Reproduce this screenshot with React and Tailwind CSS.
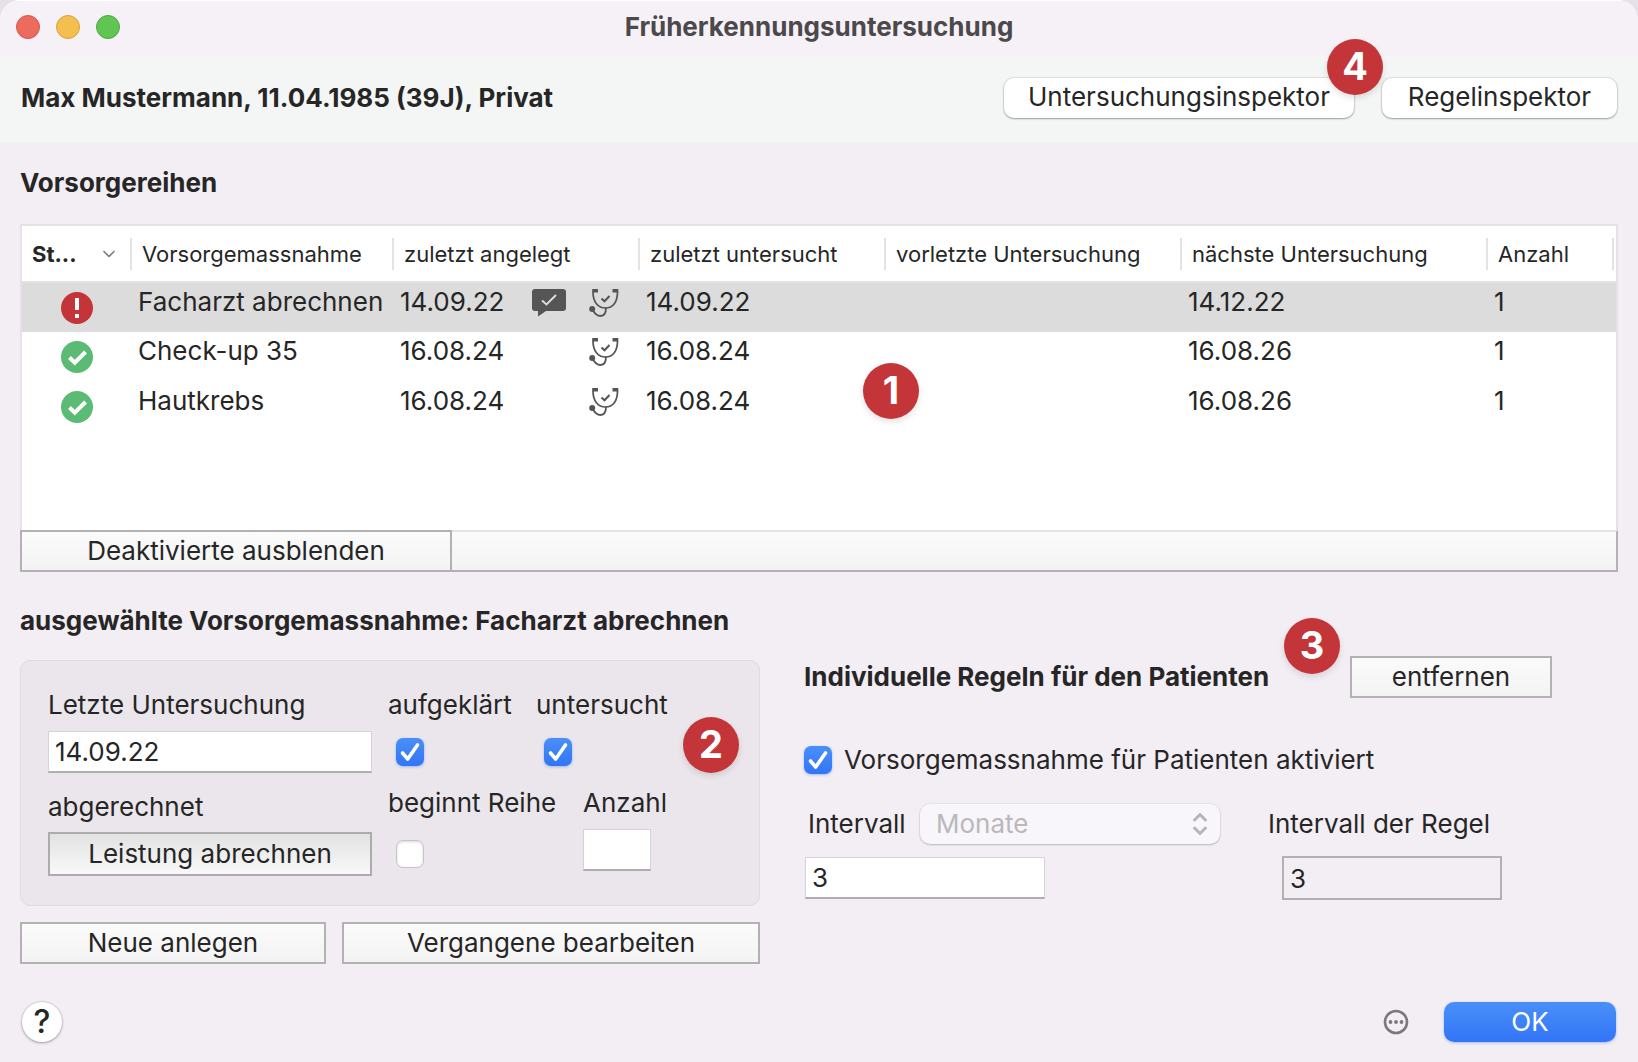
import { ChevronDown } from 'lucide-react'

const rows = [
  { status: 'alert', name: 'Facharzt abrechnen', created: '14.09.22', informed: true, examined: '14.09.22', next: '14.12.22', count: 1, selected: true },
  { status: 'ok', name: 'Check-up 35', created: '16.08.24', examined: '16.08.24', next: '16.08.26', count: 1 },
  { status: 'ok', name: 'Hautkrebs', created: '16.08.24', examined: '16.08.24', next: '16.08.26', count: 1 },
]

function StatusIcon({ status }) {
  if (status === 'alert') {
    return (
      <svg viewBox="0 0 32 32" className="size-8">
        <circle cx="16" cy="16" r="16" fill="#c33538" />
        <path d="M14 6h4v12h-4zM14 22h4v4h-4z" fill="#fff" />
      </svg>
    )
  }
  return (
    <svg viewBox="0 0 32 32" className="size-8">
      <circle cx="16" cy="16" r="16" fill="#5bbb74" />
      <path d="M8.5 16.5l5.3 5.2L24.500 11" fill="none" stroke="#fff" strokeWidth="4" />
    </svg>
  )
}

function SpeechIcon() {
  return (
    <svg viewBox="0 0 34 28" className="h-7 w-[34px]">
      <path d="M3 0h28a3 3 0 0 1 3 3v16a3 3 0 0 1-3 3H14l-8 5.500V22H3a3 3 0 0 1-3-3V3a3 3 0 0 1 3-3z" fill="#555" />
      <path d="M10 11.500l4.500 4L24 6" fill="none" stroke="#dcdcdc" strokeWidth="2" />
    </svg>
  )
}

function StethoscopeIcon() {
  return (
    <svg viewBox="0 0 30 28" className="h-7 w-[30px]" fill="none" stroke="#555">
      <path d="M4 3C4 13 9 19 16.500 19S28.500 13 28.500 3" strokeWidth="1.700" />
      <path d="M3.200 1.800H9M29.300 1.800H23.500" strokeWidth="3.600" />
      <path d="M12.500 9.500l3 2.800L20.500 7" strokeWidth="2" />
      <path d="M3.500 20.500c2 4 4.500 6.500 8 6.500 4 0 5.500-3.500 5.500-8.500" strokeWidth="1.800" />
      <circle cx="3.200" cy="20" r="3" fill="#555" stroke="none" />
    </svg>
  )
}

function Badge({ children, className }) {
  return (
    <span className={`absolute flex size-14 items-center justify-center rounded-full bg-[#c33538] pb-[2px] text-[38px] font-bold text-white shadow-[0_3px_6px_rgba(0,0,0,0.12)] ${className}`}>
      {children}
    </span>
  )
}

function Checkbox({ id, defaultChecked }) {
  return (
    <span className="relative block size-7 shrink-0">
      <input
        id={id}
        type="checkbox"
        defaultChecked={defaultChecked}
        className="peer block size-7 appearance-none rounded-[7px] border border-[#c6c3c7] bg-white shadow-[inset_0_1px_3px_rgba(0,0,0,0.15)] checked:border-0 checked:bg-linear-to-b checked:from-[#4a8ff8] checked:to-[#3274f7] checked:shadow-[0_1px_3px_rgba(50,116,247,0.4)]"
      />
      <svg viewBox="0 0 28 28" className="pointer-events-none absolute inset-0 hidden size-7 peer-checked:block">
        <path d="M6.500 15l5.200 6L21.500 7" fill="none" stroke="#fff" strokeWidth="3.600" strokeLinecap="round" strokeLinejoin="round" />
      </svg>
    </span>
  )
}

function SquareButton({ children, className = '' }) {
  return (
    <button className={`h-[42px] border-2 border-[#b2b2b2] bg-linear-to-b from-[#fbfbfb] to-[#f3f3f3] ${className}`}>
      {children}
    </button>
  )
}

function RoundedButton({ children, className = '' }) {
  return (
    <button className={`h-10 rounded-[10px] bg-white pb-[2px] shadow-[0_0_1px_1px_rgba(0,0,0,0.08),0_1px_2px_rgba(0,0,0,0.3)] ${className}`}>
      {children}
    </button>
  )
}

function TextField({ id, defaultValue, className = '' }) {
  return (
    <input
      id={id}
      type="text"
      defaultValue={defaultValue}
      className={`block h-[42px] border border-b-2 border-[#d6d2d7] border-b-[#b0adb1] bg-white px-1.5 outline-none ${className}`}
    />
  )
}

function Th({ children, className = '' }) {
  return (
    <th className="h-14 p-0 text-left font-normal">
      <div className={`flex h-8 items-center justify-between border-r-2 border-[#e3e3e3] pl-[10px] whitespace-nowrap ${className}`}>
        {children}
      </div>
    </th>
  )
}

function SeriesTable() {
  return (
    <div className="relative">
      <div className="h-[306px] border-2 border-b-0 border-[#e3e3e3] bg-white">
        <table className="w-full table-fixed">
          <colgroup>
            <col className="w-[110px]" />
            <col className="w-[262px]" />
            <col className="w-[246px]" />
            <col className="w-[246px]" />
            <col className="w-[296px]" />
            <col className="w-[306px]" />
            <col />
          </colgroup>
          <thead>
            <tr className="border-b-2 border-[#e3e3e3] text-[22px]">
              <Th className="pr-[11px] font-bold">
                St...
                <ChevronDown className="size-5 text-[#7d7d7d]" strokeWidth={2} />
              </Th>
              <Th>Vorsorgemassnahme</Th>
              <Th>zuletzt angelegt</Th>
              <Th>zuletzt untersucht</Th>
              <Th>vorletzte Untersuchung</Th>
              <Th>nächste Untersuchung</Th>
              <Th className="mr-[2px]">Anzahl</Th>
            </tr>
          </thead>
          <tbody>
            {rows.map((row) => (
              <tr key={row.name} className={`h-[50px] align-top whitespace-nowrap ${row.selected ? 'bg-[#dcdcdc]' : ''}`}>
                <td className="pt-[9px] pl-[39px]"><StatusIcon status={row.status} /></td>
                <td className="pt-[3px] pl-1.5">{row.name}</td>
                <td className="pt-[3px] pl-1.5">
                  <div className="flex justify-between pr-[21px]">
                    {row.created}
                    <span className="flex gap-[23px] pt-[3px]">
                      {row.informed && <SpeechIcon />}
                      <StethoscopeIcon />
                    </span>
                  </div>
                </td>
                <td className="pt-[3px] pl-1.5">{row.examined}</td>
                <td />
                <td className="pt-[3px] pl-1.5">{row.next}</td>
                <td className="pt-[3px] pl-1.5">{row.count}</td>
              </tr>
            ))}
          </tbody>
        </table>
      </div>
      <div className="flex">
        <SquareButton className="w-[432px]">Deaktivierte ausblenden</SquareButton>
        <div className="flex-1 border-t-2 border-r-2 border-b-2 border-[#b2b2b2] border-t-[#e3e3e3] bg-linear-to-b from-[#fbfbfb] to-[#f3f3f3]" />
      </div>
      <Badge className="top-[139px] left-[843px]">1</Badge>
    </div>
  )
}

function SelectedMeasure() {
  return (
    <section className="w-[740px] shrink-0">
      <h2 className="font-bold">ausgewählte Vorsorgemassnahme: Facharzt abrechnen</h2>
      <div className="relative mt-[23px] flex h-[246px] gap-4 rounded-[10px] border border-[#dfdbe0] bg-[#eae6eb] px-[27px] pt-7">
        <div className="w-[324px]">
          <label htmlFor="last" className="block">Letzte Untersuchung</label>
          <TextField id="last" defaultValue="14.09.22" className="mt-[10px] w-full" />
          <div className="mt-[18px]">abgerechnet</div>
          <button className="mt-[9px] h-11 w-full border-2 border-[#acacac] bg-linear-to-b from-[#e2e2e2] to-[#f9f9f9]">
            Leistung abrechnen
          </button>
        </div>
        <div>
          <div className="flex">
            <div className="w-[148px]">
              <label htmlFor="informed">aufgeklärt</label>
              <div className="mt-[10px] flex h-[42px] items-center pl-2"><Checkbox id="informed" defaultChecked /></div>
            </div>
            <div>
              <label htmlFor="examined">untersucht</label>
              <div className="mt-[10px] flex h-[42px] items-center pl-2"><Checkbox id="examined" defaultChecked /></div>
            </div>
          </div>
          <div className="mt-[14px] flex">
            <div className="w-[195px]">
              <label htmlFor="starts">beginnt Reihe</label>
              <div className="mt-[10px] flex h-[50px] items-center pl-2"><Checkbox id="starts" /></div>
            </div>
            <div>
              <label htmlFor="count">Anzahl</label>
              <TextField id="count" className="mt-[10px] w-[68px]" />
            </div>
          </div>
        </div>
        <Badge className="top-14 right-5">2</Badge>
      </div>
      <div className="mt-4 flex gap-4">
        <SquareButton className="w-[306px]">Neue anlegen</SquareButton>
        <SquareButton className="flex-1">Vergangene bearbeiten</SquareButton>
      </div>
    </section>
  )
}

function PatientRules() {
  return (
    <section className="flex-1 pt-[51px]">
      <div className="flex items-center">
        <div className="relative w-[546px]">
          <h2 className="font-bold">Individuelle Regeln für den Patienten</h2>
          <Badge className="right-[10px] bottom-[19px]">3</Badge>
        </div>
        <SquareButton className="w-[202px]">entfernen</SquareButton>
      </div>
      <div className="mt-[46px] flex items-center gap-3">
        <Checkbox id="active" defaultChecked />
        <label htmlFor="active">Vorsorgemassnahme für Patienten aktiviert</label>
      </div>
      <div className="mt-[28px] flex">
        <div className="w-[464px]">
          <div className="flex h-10 items-center pl-1">
            <label htmlFor="unit" className="w-28">Intervall</label>
            <div className="relative">
              <select
                id="unit"
                disabled
                className="h-10 w-[300px] appearance-none rounded-[10px] bg-[#f8f6fa] pl-4 text-[#bab8bb] opacity-100 shadow-[0_0_1px_1px_rgba(0,0,0,0.04),0_1px_2px_rgba(0,0,0,0.2)]"
              >
                <option>Monate</option>
              </select>
              <svg viewBox="0 0 16 24" className="pointer-events-none absolute top-2 right-3 h-6 w-4" fill="none" stroke="#b6b4b7" strokeWidth="3" strokeLinecap="round" strokeLinejoin="round">
                <path d="M2.500 8L8 2.500 13.500 8M2.500 16L8 21.500 13.500 16" />
              </svg>
            </div>
          </div>
          <TextField id="interval" defaultValue="3" className="mt-[13px] ml-px w-60" />
        </div>
        <div>
          <label htmlFor="ruleInterval" className="flex h-10 items-center">Intervall der Regel</label>
          <input
            id="ruleInterval"
            type="text"
            readOnly
            value="3"
            className="mt-3 ml-[14px] block h-11 w-[220px] border-2 border-[#b3afb4] bg-transparent px-1.5 outline-none"
          />
        </div>
      </div>
    </section>
  )
}

export default function App() {
  return (
    <div className="bg-[#e6e1e8] font-['Inter',sans-serif] text-[26px] leading-8 text-[#262626]">
      <div className="flex min-h-screen flex-col overflow-hidden rounded-t-[20px] bg-[#f3eef4]">
        <header className="relative flex h-14 items-center justify-center border-t border-white bg-[#f6f1f7] pb-[3px]">
          <div className="absolute left-4 flex gap-4">
            <button aria-label="Schließen" className="size-6 rounded-full border border-[#d9544b] bg-[#ec6a5e]" />
            <button aria-label="Minimieren" className="size-6 rounded-full border border-[#d8a13d] bg-[#f4bf4f]" />
            <button aria-label="Zoomen" className="size-6 rounded-full border border-[#50a73f] bg-[#61c554]" />
          </div>
          <h1 className="font-bold text-[#4b494c]">Früherkennungsuntersuchung</h1>
        </header>

        <div className="flex h-[86px] items-center justify-between bg-[#f4f6f5] px-[21px] pb-[2px]">
          <div className="font-bold">Max Mustermann, 11.04.1985 (39J), Privat</div>
          <div className="flex gap-7">
            <div className="relative">
              <RoundedButton className="w-[350px]">Untersuchungsinspektor</RoundedButton>
              <Badge className="-top-[39px] -right-[29px]">4</Badge>
            </div>
            <RoundedButton className="w-[235px]">Regelinspektor</RoundedButton>
          </div>
        </div>

        <main className="px-5 pt-[25px]">
          <h2 className="mb-[25px] font-bold">Vorsorgereihen</h2>
          <SeriesTable />
          <div className="mt-[33px] flex gap-11">
            <SelectedMeasure />
            <PatientRules />
          </div>
        </main>

        <footer className="mt-auto flex items-center justify-between px-[22px] pb-5">
          <button aria-label="Hilfe" className="size-10 rounded-full bg-white text-[32px] font-medium shadow-[0_0_1px_1px_rgba(0,0,0,0.08),0_1px_3px_rgba(0,0,0,0.3)]">?</button>
          <div className="flex items-center gap-[35px]">
            <button aria-label="Mehr">
              <svg viewBox="0 0 26 26" className="size-[26px]">
                <circle cx="13" cy="13" r="11" fill="none" stroke="#7b787c" strokeWidth="2.600" />
                <circle cx="7.500" cy="13" r="1.900" fill="#7b787c" />
                <circle cx="13" cy="13" r="1.900" fill="#7b787c" />
                <circle cx="18.500" cy="13" r="1.900" fill="#7b787c" />
              </svg>
            </button>
            <button className="h-10 w-[172px] rounded-[10px] bg-linear-to-b from-[#4a8ff8] to-[#3274f7] text-white shadow-[0_1px_3px_rgba(50,116,247,0.4)]">OK</button>
          </div>
        </footer>
      </div>
    </div>
  )
}
